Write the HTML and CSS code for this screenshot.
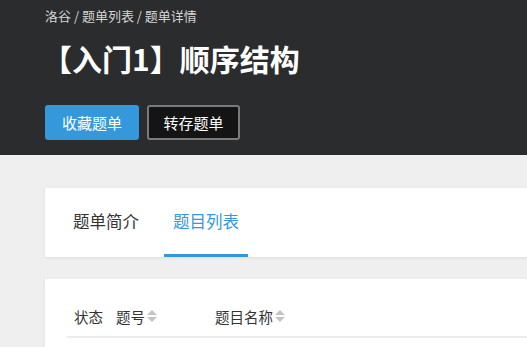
FILE: index.html
```html
<!DOCTYPE html>
<html lang="zh-CN">
<head>
	<meta charset="UTF-8">
	<title>题单详情</title>
	<link rel="stylesheet" href="styles.css">
</head>
<body>
	<div class="header">
		<div class="crumb">洛谷 / 题单列表 / 题单详情</div>
		<h1 class="title">【入门1】顺序结构</h1>
		<div class="actions">
			<a class="btn btn-blue">收藏题单</a>
			<a class="btn btn-dark">转存题单</a>
		</div>
	</div>
	<div class="main">
		<div class="card tabs">
			<span class="tab">题单简介</span>
			<span class="tab active">题目列表</span>
		</div>
		<div class="card list">
			<div class="thead">
				<span class="col col-state">状态</span>
				<span class="col col-pid">题号<i class="sort"></i></span>
				<span class="col col-name">题目名称<i class="sort"></i></span>
			</div>
		</div>
	</div>
</body>
</html>
```

FILE: styles.css
```css
*{margin:0;padding:0;box-sizing:border-box;}
html,body{overflow:hidden;}
body{
	background-color:#efefef;
	font-family:"Noto Sans CJK SC","Liberation Sans",sans-serif;
	color:#333;
	width:527px;
	height:347px;
}
.header{
	background-color:#2b2c2e;
	padding:8px 0 15px 45px;
	height:155px;
}
.crumb{
	font-size:13px;
	line-height:16px;
	color:#d4d4d4;
}
.title{
	margin-top:14px;
	font-size:30px;
	line-height:40px;
	font-weight:bold;
	color:#fff;
	margin-left:-3px;
}
.actions{
	margin-top:27px;
	display:flex;
	gap:8px;
}
.btn{
	display:block;
	height:35px;
	line-height:31px;
	font-size:15px;
	color:#fff;
	border-radius:3px;
	border:2px solid transparent;
	text-align:center;
	cursor:pointer;
}
.btn-blue{
	background-color:#3498db;
	border-color:#3498db;
	width:94px;
}
.btn-dark{
	background-color:#141414;
	border-color:#7a7a7a;
	width:93px;
}
.main{
	padding:33px 0 0 45px;
	width:1200px;
}
.card{
	background-color:#fff;
	box-shadow:0 1px 3px rgba(0,0,0,0.08);
}
.tabs{
	height:69px;
	padding-left:19px;
	display:flex;
	gap:16px;
}
.tab{
	width:84px;
	font-size:16.5px;
	line-height:66px;
	text-align:center;
	color:#333;
	border-bottom:3px solid transparent;
}
.tab.active{
	color:#3498db;
	border-bottom-color:#3498db;
}
.list{
	margin-top:22px;
	padding:19px 22px 0;
	height:80px;
}
.thead{
	display:flex;
	height:40px;
	align-items:center;
	padding-bottom:2px;
	border-bottom:2px solid #ececec;
	font-size:14.5px;
}
.col{
	padding-left:7px;
	display:flex;
	align-items:center;
}
.col-state{width:42px;}
.col-pid{width:99px;}
.sort{
	display:inline-block;
	width:10px;
	height:12px;
	margin-left:2px;
	position:relative;
}
.sort:before,.sort:after{
	content:"";
	position:absolute;
	left:0;
	border-left:5px solid transparent;
	border-right:5px solid transparent;
}
.sort:before{
	top:0;
	border-bottom:5px solid #c4c4c4;
}
.sort:after{
	bottom:0;
	border-top:5px solid #c4c4c4;
}
```
